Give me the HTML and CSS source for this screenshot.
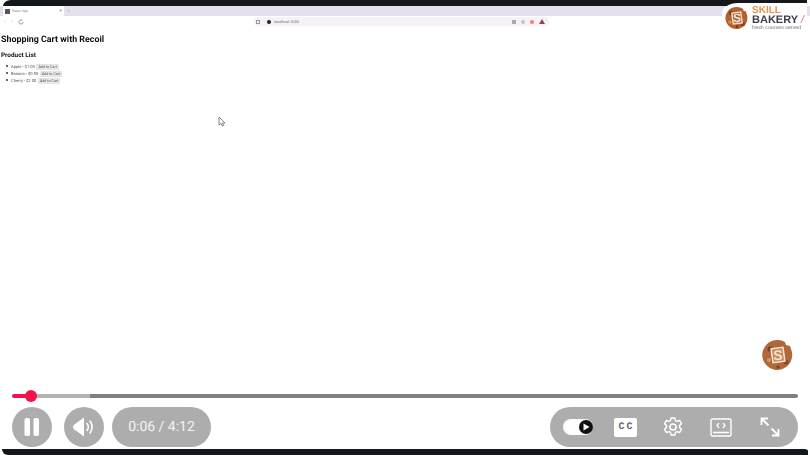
FILE: index.html
```html
<!DOCTYPE html>
<html lang="en">
<head>
    <meta charset="UTF-8">
    <meta name="viewport" content="width=device-width, initial-scale=1.0">
    <title>Shopping Cart with Recoil</title>
    <link rel="stylesheet" href="styles.css">
</head>
<body>
    <div class="player">
        <div class="top-band"></div>

        <!-- Recorded browser window -->
        <div class="browser">
            <div class="tab-strip">
                <div class="tab">
                    <span class="favicon"></span>
                    <span class="tab-title">React App</span>
                    <span class="tab-close">×</span>
                </div>
                <span class="tab-new">+</span>
            </div>
            <div class="toolbar">
                <div class="nav-icons">
                    <span>‹</span>
                    <span>›</span>
                    <svg width="6" height="6" viewBox="0 0 6 6"><path d="M5 3a2 2 0 1 1-.6-1.4" fill="none" stroke="#666" stroke-width=".7"/></svg>
                </div>
                <div class="address">
                    <span class="page-icon"></span>
                    <span class="site-dot"></span>
                    <span class="url">localhost:3000</span>
                    <div class="ext-icons">
                        <span class="ext ext-grey"></span>
                        <span class="ext ext-light"></span>
                        <span class="ext ext-red"></span>
                        <span class="ext-warn"></span>
                    </div>
                </div>
            </div>
            <div class="page">
                <h1>Shopping Cart with Recoil</h1>
                <h2>Product List</h2>
                <ul class="products">
                    <li>Apple - $1.00 <button>Add to Cart</button></li>
                    <li>Banana - $0.50 <button>Add to Cart</button></li>
                    <li>Cherry - $2.00 <button>Add to Cart</button></li>
                </ul>
            </div>
        </div>

        <!-- Mouse pointer in the recording -->
        <svg class="cursor" width="8" height="11" viewBox="0 0 8 11"><path d="M1 1v8l2-1.6L4.300 10l1.400-.6L4.500 7H7z" fill="#fff" stroke="#666" stroke-width=".8"/></svg>

        <!-- Logo top right -->
        <div class="logo">
            <svg class="cookie" width="24" height="24" viewBox="0 0 24 24">
                <path d="M12 1a11 11 0 0 1 6 1.800l.5 2 2.500.8.500 2A11 11 0 1 1 12 1z" fill="#b5602f"/>
                <circle cx="6" cy="7" r="2.200" fill="#7d3d1c"/>
                <circle cx="18" cy="18" r="2.200" fill="#8a4520"/>
                <circle cx="5" cy="16" r="1.800" fill="#d98d4f"/>
                <circle cx="12" cy="20.500" r="1.300" fill="#6f3517"/>
                <rect x="7.500" y="6.500" width="9" height="11" fill="none" stroke="#f3e3d2" stroke-width="1.400" transform="rotate(-8 12 12)"/>
                <text x="12" y="15.500" class="cookie-s">S</text>
            </svg>
            <div class="logo-text">
                <span class="logo-skill">SKILL</span>
                <span class="logo-bakery">BAKERY <i>/</i></span>
                <span class="logo-tag">fresh courses served</span>
            </div>
        </div>

        <svg class="cookie-small" width="32" height="32" viewBox="0 0 32 32">
            <path d="M16 1a15 15 0 0 1 7 2l1 3 4 1 1 3a15 15 0 1 1-13-9z" fill="#b0673a"/>
            <circle cx="8" cy="10" r="2.500" fill="#7d4020"/>
            <circle cx="24" cy="23" r="2.500" fill="#8a4a26"/>
            <circle cx="7" cy="21" r="2" fill="#d9965c"/>
            <circle cx="16" cy="28" r="1.600" fill="#7d4020"/>
            <rect x="10" y="9" width="12" height="14" fill="#c98a58" stroke="#f5e8da" stroke-width="1.500" transform="rotate(-8 16 16)"/>
            <text x="16" y="21" class="cookie-s cookie-s-big">S</text>
        </svg>

        <!-- Player controls -->
        <div class="controls">
            <div class="progress">
                <div class="progress-played"></div>
                <div class="progress-knob"></div>
                <div class="progress-buffered"></div>
                <div class="progress-rest"></div>
            </div>
            <div class="buttons">
                <div class="left-buttons">
                    <div class="round-btn">
                        <svg width="16" height="20" viewBox="0 0 16 20"><rect x="0.500" y="1" width="5.500" height="18" rx="1.800" fill="#fff"/><rect x="9.500" y="1" width="5.500" height="18" rx="1.800" fill="#fff"/></svg>
                    </div>
                    <div class="round-btn">
                        <svg width="24" height="22" viewBox="0 0 24 22">
                            <path d="M1 11c0-1.500 1-2.500 2-3l9-6.500v19L3 14c-1-.5-2-1.500-2-3z" fill="#fff"/>
                            <path d="M15 7.500c1.600 2 1.600 5 0 7" fill="none" stroke="#fff" stroke-width="1.600" stroke-linecap="round"/>
                            <path d="M18 5c2.800 3.500 2.800 8.500 0 12" fill="none" stroke="#fff" stroke-width="1.600" stroke-linecap="round"/>
                        </svg>
                    </div>
                    <div class="time">0:06 / 4:12</div>
                </div>
                <div class="right-buttons">
                    <div class="autoplay">
                        <span class="autoplay-knob">
                            <svg width="8" height="8" viewBox="0 0 8 8"><path d="M1.500 .5 7.500 4l-6 3.500z" fill="#fff"/></svg>
                        </span>
                    </div>
                    <span class="cc">CC</span>
                    <svg class="gear" width="20" height="22" viewBox="0 0 22 24">
                        <path d="M9 2h4l.8 3 1.500.8 3-.9 2 3.500-2.200 2.100v1.900l2.200 2.100-2 3.500-3-.9-1.500.8-.8 3H9l-.8-3-1.500-.8-3 .9-2-3.500 2.200-2.100v-1.900L1.700 8.400l2-3.500 3 .9L8.200 5z" fill="none" stroke="#fff" stroke-width="1.600" stroke-linejoin="round"/>
                        <circle cx="11" cy="12" r="3.400" fill="none" stroke="#fff" stroke-width="1.700"/>
                    </svg>
                    <svg class="screen" width="22" height="19" viewBox="0 0 22 19">
                        <rect x="1" y="1" width="20" height="17" rx="1.500" fill="none" stroke="#fff" stroke-width="1.400"/>
                        <path d="M3 14.500h16" stroke="#fff" stroke-width="1.600"/>
                        <path d="M9 5 7 7.500 9 10M13 5l2 2.500L13 10" fill="none" stroke="#fff" stroke-width="1.300"/>
                    </svg>
                    <svg class="expand" width="20" height="20" viewBox="0 0 20 20">
                        <path d="M1.500 8V1.500H8M1.500 1.500l7 7" fill="none" stroke="#fff" stroke-width="1.800"/>
                        <path d="M18.500 12v6.500H12M18.500 18.500l-7-7" fill="none" stroke="#fff" stroke-width="1.800"/>
                    </svg>
                </div>
            </div>
        </div>

        <div class="bottom-band"></div>
    </div>
</body>
</html>
```

FILE: styles.css
```css
* {
    box-sizing: border-box;
}
html, body {
    margin: 0;
    padding: 0;
}
body {
    width: 810px;
    height: 455px;
    overflow: hidden;
    background-color: #fff;
    font-family: "Roboto", "Liberation Sans", sans-serif;
    text-rendering: geometricPrecision;
}
.player {
    position: relative;
    width: 810px;
    height: 455px;
    overflow: hidden;
    background-color: #fff;
}
.top-band {
    height: 6px;
    margin-left: 3px;
    margin-right: 3px;
    background-color: #14171c;
    border-top-left-radius: 8px 6px;
}
.bottom-band {
    position: absolute;
    left: 2px;
    right: 2px;
    bottom: 0;
    height: 6px;
    background-color: #14171c;
    border-bottom-left-radius: 6px;
    border-top-right-radius: 4px 2px;
}
.browser {
    filter: blur(0.5px);
}
.tab-strip {
    display: flex;
    align-items: center;
    height: 10px;
    padding-left: 3px;
    background-color: #e6e0ec;
}
.tab {
    display: flex;
    align-items: center;
    gap: 2px;
    width: 61px;
    height: 10px;
    padding: 0 2px;
    background-color: #fff;
}
.favicon {
    width: 5px;
    height: 5px;
    background-color: #555;
}
.tab-title {
    flex: 1;
    font-size: 3.500px;
    color: #888;
}
.tab-close {
    font-size: 5px;
    color: #666;
}
.tab-new {
    margin-left: 3px;
    font-size: 6px;
    color: #bbb;
}
.toolbar {
    display: flex;
    align-items: center;
    height: 11px;
    padding-left: 4px;
    background-color: #fff;
}
.nav-icons {
    display: flex;
    align-items: center;
    gap: 5px;
    width: 250px;
    font-size: 6px;
    line-height: 6px;
    color: #ccc;
}
.address {
    display: flex;
    align-items: center;
    width: 295px;
    height: 9px;
    background-color: #f6f1f8;
    border-radius: 4px;
}
.page-icon {
    width: 4px;
    height: 4px;
    margin-left: 2px;
    border: 0.600px solid #999;
}
.site-dot {
    width: 4px;
    height: 4px;
    margin-left: 7px;
    background-color: #222;
    border-radius: 50%;
}
.url {
    flex: 1;
    margin-left: 3px;
    font-size: 3.800px;
    color: #777;
}
.ext-icons {
    display: flex;
    align-items: center;
    gap: 5px;
    margin-right: 4px;
}
.ext {
    width: 4px;
    height: 4px;
}
.ext-grey {
    background-color: #aaa;
}
.ext-light {
    background-color: #c4c4c4;
    border-radius: 50%;
}
.ext-red {
    background-color: #e8856a;
    border-radius: 50%;
}
.ext-warn {
    width: 0;
    height: 0;
    border-left: 3px solid transparent;
    border-right: 3px solid transparent;
    border-bottom: 5px solid #9c3f55;
}
.page {
    padding: 7px 0 0 1px;
    color: #111;
}
.page h1 {
    margin: 0;
    font-size: 8.900px;
    line-height: 12px;
    font-weight: 700;
}
.page h2 {
    margin: 4.500px 0 0;
    font-size: 6.400px;
    line-height: 9px;
    font-weight: 700;
}
.products {
    margin: 4.500px 0 0;
    padding: 0;
    list-style: none;
    font-size: 4.100px;
    line-height: 6.200px;
    color: #555;
}
.products li {
    padding-left: 5px;
}
.products li::before {
    content: "";
    display: inline-block;
    width: 2px;
    height: 2px;
    margin-right: 3px;
    vertical-align: 1px;
    background-color: #333;
    border-radius: 50%;
}
.products button {
    margin-left: 0.500px;
    padding: 0 1px;
    height: 6px;
    font-family: inherit;
    font-size: 3.700px;
    line-height: 5px;
    color: #555;
    background-color: #ebebeb;
    border: 0.500px solid #e2e2e2;
    border-radius: 1px;
}
.cursor {
    position: absolute;
    left: 218px;
    top: 116px;
    filter: blur(0.3px);
}
.logo {
    position: absolute;
    top: 3px;
    right: 3px;
    display: flex;
    align-items: center;
    gap: 3px;
    width: 85px;
    height: 30px;
    padding-left: 3px;
    background-color: #fff;
    border-top-left-radius: 16px 10px;
    border-bottom-left-radius: 4px;
}
.cookie {
    flex: none;
    filter: blur(0.3px);
}
.cookie-s {
    font-family: "Liberation Sans", sans-serif;
    font-size: 12px;
    font-weight: 700;
    fill: #f3e3d2;
    text-anchor: middle;
}
.cookie-s-big {
    font-size: 14px;
}
.cookie-small {
    position: absolute;
    left: 762px;
    top: 339px;
    filter: blur(0.7px);
}
.logo-text {
    display: flex;
    flex-direction: column;
    font-family: "Liberation Sans", sans-serif;
    white-space: nowrap;
    filter: blur(0.3px);
}
.logo-skill {
    font-size: 10px;
    line-height: 9px;
    font-weight: 700;
    color: #e8914f;
}
.logo-bakery {
    font-size: 11px;
    line-height: 10px;
    font-weight: 700;
    color: #3b3f4a;
}
.logo-bakery i {
    font-weight: 400;
    color: #d9738c;
}
.logo-tag {
    font-size: 5.300px;
    line-height: 6px;
    color: #777;
}
.controls {
    position: absolute;
    left: 12px;
    right: 12px;
    top: 392px;
}
.progress {
    position: relative;
    display: flex;
    align-items: center;
    height: 8px;
}
.progress-played {
    width: 19px;
    height: 4px;
    background-color: #f5124a;
    border-radius: 2px 0 0 2px;
}
.progress-knob {
    position: absolute;
    left: 13px;
    top: -2px;
    width: 12px;
    height: 12px;
    background-color: #f5124a;
    border-radius: 50%;
}
.progress-buffered {
    width: 59px;
    height: 4px;
    background-color: #b3b3b3;
}
.progress-rest {
    flex: 1;
    height: 4px;
    background-color: #808080;
    border-radius: 0 2px 2px 0;
}
.buttons {
    display: flex;
    justify-content: space-between;
    margin-top: 7px;
}
.left-buttons {
    display: flex;
    gap: 12px;
}
.round-btn {
    display: flex;
    align-items: center;
    justify-content: center;
    width: 40px;
    height: 40px;
    background-color: #adadad;
    border-radius: 50%;
}
.time {
    width: 99px;
    height: 40px;
    margin-left: -4px;
    font-size: 14px;
    line-height: 40px;
    text-align: center;
    color: #f4f4f4;
    background-color: #adadad;
    border-radius: 20px;
}
.right-buttons {
    display: flex;
    align-items: center;
    width: 248px;
    height: 40px;
    padding-left: 13px;
    background-color: #adadad;
    border-radius: 20px;
}
.autoplay {
    display: flex;
    align-items: center;
    justify-content: flex-end;
    width: 30px;
    height: 16px;
    background-color: #fff;
    border-radius: 8px;
}
.autoplay-knob {
    display: flex;
    align-items: center;
    justify-content: center;
    width: 14px;
    height: 14px;
    background-color: #111;
    border-radius: 50%;
}
.cc {
    width: 23px;
    height: 19px;
    margin-left: 21px;
    font-family: "Liberation Mono", monospace;
    font-size: 10px;
    font-weight: 700;
    letter-spacing: 2px;
    line-height: 20px;
    text-align: center;
    text-indent: 2px;
    color: #666;
    background-color: #fff;
    border-radius: 2px;
}
.gear, .screen, .expand {
    flex: none;
    margin-left: 27px;
}
.gear {
    margin-left: 26px;
}
.expand {
    margin-left: 28px;
}
```
